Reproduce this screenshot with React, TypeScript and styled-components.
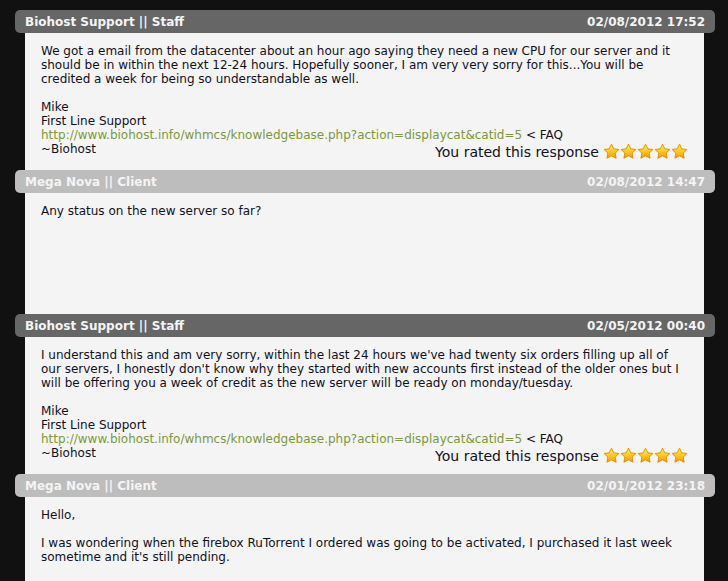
import React from "react";
import styled, { createGlobalStyle } from "styled-components";

const GlobalStyle = createGlobalStyle`
   html, body {
      margin: 0;
      padding: 0;
      background: #111111;
   }
   body {
      font-family: "DejaVu Sans", "Liberation Sans", sans-serif;
   }
`;

type Reply = {
   name: string;
   role: "Staff" | "Client";
   date: string;
   lines: string[];
   signature?: boolean;
   rated?: boolean;
};

const FAQ_URL = "http://www.biohost.info/whmcs/knowledgebase.php?action=displaycat&catid=5";

const replies: Reply[] = [
   {
      name: "Biohost Support",
      role: "Staff",
      date: "02/08/2012 17:52",
      lines: [
         "We got a email from the datacenter about an hour ago saying they need a new CPU for our server and it should be in within the next 12-24 hours. Hopefully sooner, I am very very sorry for this...You will be credited a week for being so understandable as well.",
      ],
      signature: true,
      rated: true,
   },
   {
      name: "Mega Nova",
      role: "Client",
      date: "02/08/2012 14:47",
      lines: ["Any status on the new server so far?"],
   },
   {
      name: "Biohost Support",
      role: "Staff",
      date: "02/05/2012 00:40",
      lines: [
         "I understand this and am very sorry, within the last 24 hours we've had twenty six orders filling up all of our servers, I honestly don't know why they started with new accounts first instead of the older ones but I will be offering you a week of credit as the new server will be ready on monday/tuesday.",
      ],
      signature: true,
      rated: true,
   },
   {
      name: "Mega Nova",
      role: "Client",
      date: "02/01/2012 23:18",
      lines: [
         "Hello,",
         "I was wondering when the firebox RuTorrent I ordered was going to be activated, I purchased it last week sometime and it's still pending.",
      ],
   },
];

const Star = ({ id }: { id: string }) => (
   <svg width="17" height="17" viewBox="0 0 24 24">
      <defs>
         <linearGradient id={id} x1="0" y1="0" x2="0" y2="1">
            <stop offset="0" stopColor="#fff27a" />
            <stop offset="0.55" stopColor="#ffc61a" />
            <stop offset="1" stopColor="#f59a00" />
         </linearGradient>
      </defs>
      <path
         d="M12 1.6l3.2 6.6 7.2 1-5.2 5.1 1.3 7.2L12 18.1l-6.5 3.4 1.3-7.2L1.6 9.2l7.2-1z"
         fill={`url(#${id})`}
         stroke="#e28a00"
         strokeWidth="1.3"
         strokeLinejoin="round"
      />
   </svg>
);

const Page = () => (
   <Thread>
      {replies.map((r, i) => (
         <Ticket key={i}>
            <TicketHeader $staff={r.role === "Staff"}>
               <span>{r.name} || {r.role}</span>
               <span>{r.date}</span>
            </TicketHeader>
            <TicketBody>
               {r.lines.map((line, j) => (
                  <Paragraph key={j}>{line}</Paragraph>
               ))}
               {r.signature && (
                  <Paragraph>
                     Mike
                     <br />
                     First Line Support
                     <br />
                     <Link href="#">{FAQ_URL}</Link> &lt; FAQ
                     <SignRow>
                        <span>~Biohost</span>
                        {r.rated && (
                           <Rating>
                              You rated this response
                              <Stars>
                                 {[0, 1, 2, 3, 4].map((s) => (
                                    <Star key={s} id={`star-${i}-${s}`} />
                                 ))}
                              </Stars>
                           </Rating>
                        )}
                     </SignRow>
                  </Paragraph>
               )}
            </TicketBody>
         </Ticket>
      ))}
   </Thread>
);

export default function App() {
   return (
      <>
         <GlobalStyle />
         <Page />
      </>
   );
}

const Thread = styled.div`
   display: flex;
   flex-direction: column;
   padding: 10px 13px 0 15px;
`;

const Ticket = styled.div`
   display: flex;
   flex-direction: column;
`;

const TicketHeader = styled.div<{ $staff: boolean }>`
   display: flex;
   justify-content: space-between;
   align-items: center;
   height: 23px;
   padding: 0 10px;
   border-radius: 5px;
   background: ${(p) => (p.$staff ? "#666666" : "#bdbdbd")};
   color: #f4f4f4;
   font-weight: bold;
   font-size: 12px;
`;

const TicketBody = styled.div`
   margin: 0 11px 0 10px;
   min-height: 96px;
   padding: 11px 16px 14px 16px;
   background: #f4f4f4;
   color: #111122;
   font-size: 12px;
   line-height: 14px;
`;

const Paragraph = styled.div`
   & + & {
      margin-top: 14px;
   }
`;

const Link = styled.a`
   color: #7a9a35;
   text-decoration: none;
`;

const SignRow = styled.div`
   display: flex;
   justify-content: space-between;
   align-items: flex-end;
`;

const Rating = styled.div`
   display: flex;
   align-items: center;
   gap: 4px;
   font-size: 14px;
   line-height: 16px;
   margin-bottom: -4px;
`;

const Stars = styled.span`
   display: flex;
`;
